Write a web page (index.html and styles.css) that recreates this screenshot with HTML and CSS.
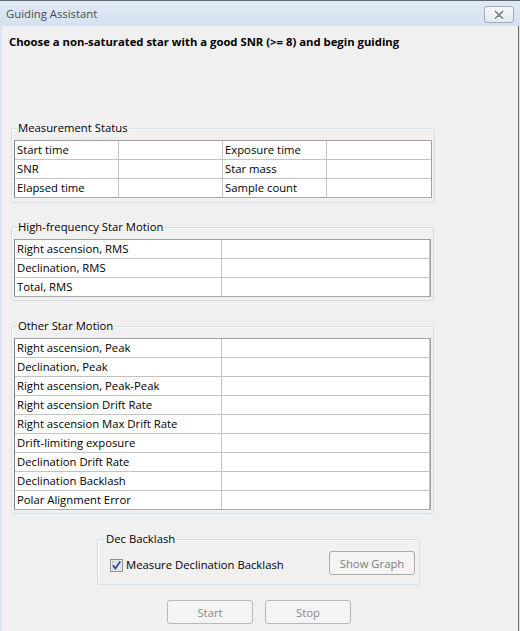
FILE: index.html
```html
<!DOCTYPE html>
<html>
<head>
<meta charset="utf-8">
<title>Guiding Assistant</title>
<link rel="stylesheet" href="styles.css">
</head>
<body>
<div class="window">
  <div class="titlebar">
    <span class="title">Guiding Assistant</span>
    <span class="close">
      <svg width="30" height="16" viewBox="0 0 30 16">
        <path d="M11 4 L19 11.5 M19 4 L11 11.5" stroke="#ffffff" stroke-width="4" stroke-linecap="round"/>
        <path d="M11 4 L19 11.5 M19 4 L11 11.5" stroke="#7d858e" stroke-width="1.8" stroke-linecap="round"/>
      </svg>
    </span>
  </div>
  <div class="body">
    <p class="intro">Choose a non-saturated star with a good SNR (&gt;= 8) and begin guiding</p>

    <fieldset class="group g-status">
      <legend>Measurement Status</legend>
      <div class="grid grid4">
        <div class="cell">Start time</div><div class="cell"></div><div class="cell">Exposure time</div><div class="cell"></div>
        <div class="cell">SNR</div><div class="cell"></div><div class="cell">Star mass</div><div class="cell"></div>
        <div class="cell">Elapsed time</div><div class="cell"></div><div class="cell">Sample count</div><div class="cell"></div>
      </div>
    </fieldset>

    <fieldset class="group g-hf">
      <legend>High-frequency Star Motion</legend>
      <div class="grid grid2">
        <div class="cell">Right ascension, RMS</div><div class="cell"></div>
        <div class="cell">Declination, RMS</div><div class="cell"></div>
        <div class="cell">Total, RMS</div><div class="cell"></div>
      </div>
    </fieldset>

    <fieldset class="group g-other">
      <legend>Other Star Motion</legend>
      <div class="grid grid2">
        <div class="cell">Right ascension, Peak</div><div class="cell"></div>
        <div class="cell">Declination, Peak</div><div class="cell"></div>
        <div class="cell">Right ascension, Peak-Peak</div><div class="cell"></div>
        <div class="cell">Right ascension Drift Rate</div><div class="cell"></div>
        <div class="cell">Right ascension Max Drift Rate</div><div class="cell"></div>
        <div class="cell">Drift-limiting exposure</div><div class="cell"></div>
        <div class="cell">Declination Drift Rate</div><div class="cell"></div>
        <div class="cell">Declination Backlash</div><div class="cell"></div>
        <div class="cell">Polar Alignment Error</div><div class="cell"></div>
      </div>
    </fieldset>

    <fieldset class="group g-dec">
      <legend>Dec Backlash</legend>
      <div class="dec-row">
        <label class="check">
          <span class="box">
            <svg width="13" height="13" viewBox="0 0 13 13">
              <defs>
                <linearGradient id="cb" x1="0" y1="0" x2="1" y2="1">
                  <stop offset="0" stop-color="#d9dde2"/>
                  <stop offset="1" stop-color="#f7f8f9"/>
                </linearGradient>
              </defs>
              <rect x="0.5" y="0.5" width="12" height="12" fill="#ffffff" stroke="#8e8f8f"/>
              <rect x="2" y="2" width="9" height="9" fill="url(#cb)" stroke="#b5bac0" stroke-width="0.6"/>
              <path d="M3 6.3 L5.4 9.6 L10.2 2.6" fill="none" stroke="#2d4c9c" stroke-width="1.8" stroke-linejoin="round"/>
            </svg>
          </span>
          <span>Measure Declination Backlash</span>
        </label>
        <button class="btn btn-graph" type="button">Show Graph</button>
      </div>
    </fieldset>

    <div class="actions">
      <button class="btn" type="button">Start</button>
      <button class="btn" type="button">Stop</button>
    </div>
  </div>
</div>
</body>
</html>
```
FILE: styles.css
```css
html, body {
  margin: 0;
  padding: 0;
}

body {
  font-family: "Open Sans", "Noto Sans", sans-serif;
  font-size: 11.3px;
  color: #000;
  background: #e8e8e8;
}

.window {
  width: 520px;
  height: 631px;
  display: flex;
  flex-direction: column;
  background: #e4e4e4;
}

.titlebar {
  box-sizing: border-box;
  height: 26px;
  flex: none;
  display: flex;
  justify-content: space-between;
  align-items: flex-start;
  padding: 0 6px 0 6px;
  border-top: 1px solid #5f6a76;
  background: linear-gradient(#e1e9f4, #d5e1ef);
}

.title {
  align-self: center;
  line-height: 16px;
  color: #474c52;
}

.close {
  margin-top: 5px;
  box-sizing: border-box;
  width: 30px;
  height: 17px;
  border: 1px solid #a3adb9;
  border-radius: 3px;
  background: linear-gradient(#f4f7fa, #e2e8ef);
  display: flex;
  align-items: center;
  justify-content: center;
}

.close svg {
  display: block;
}

.body {
  flex: 1;
  display: flex;
  flex-direction: column;
  align-items: flex-start;
  background: #f0f0f0;
  border-left: 2px solid #d9e4f1;
  border-right: 1px solid #6e6e6e;
  margin-right: 1px;
}

.intro {
  margin: 0;
  padding: 8px 0 0 7px;
  font-weight: bold;
  line-height: 16px;
}

.group {
  box-sizing: border-box;
  margin: 16px 0 0 9px;
  padding: 4px 2px 3px 2px;
  border: 1px solid #d5dfe5;
  border-radius: 3px;
  box-shadow: inset 1px 1px 0 #ffffff;
  min-inline-size: 0;
}

.group legend {
  margin-left: 3px;
  padding: 0 1px;
  line-height: 16px;
}

.g-status {
  margin-top: 70px;
  width: 424px;
  padding-bottom: 4px;
}

.g-hf,
.g-other {
  width: 423px;
}

.g-other {
  margin-top: 17px;
}

.grid {
  display: grid;
  gap: 1px;
  background: #c3c3c3;
  border-top: 1px solid #a0a0a0;
  border-left: 1px solid #828282;
  border-right: 1px solid #a0a0a0;
  border-bottom: 1px solid #a8a8a8;
}

.grid4 {
  grid-template-columns: 103px 103px 103px 104px;
}

.grid2 {
  grid-template-columns: 206px 207px;
}

.cell {
  background: #ffffff;
  height: 18px;
  line-height: 18px;
  padding: 0 2px;
  white-space: nowrap;
  overflow: hidden;
}

.g-dec {
  margin: 17px 0 0 95px;
  width: 323px;
  padding: 4px 4px 9px 12px;
}

.g-dec legend {
  margin-left: -5px;
}

.dec-row {
  display: flex;
  justify-content: space-between;
  align-items: center;
}

.check {
  display: flex;
  align-items: center;
  margin-top: 4px;
  line-height: 16px;
}

.box {
  display: block;
  width: 13px;
  height: 13px;
  margin-right: 3px;
}

.box svg {
  display: block;
}

.btn {
  box-sizing: border-box;
  width: 86px;
  height: 24px;
  padding: 0;
  font-family: inherit;
  font-size: 11.3px;
  color: #8a8a8a;
  background: #f4f4f4;
  border: 1px solid #b5b8bb;
  border-radius: 3px;
}

.btn-graph {
  color: #7c7c7c;
  border-color: #a9acaf;
}

.actions {
  display: flex;
  gap: 12px;
  margin: 15px 0 0 165px;
}
```
